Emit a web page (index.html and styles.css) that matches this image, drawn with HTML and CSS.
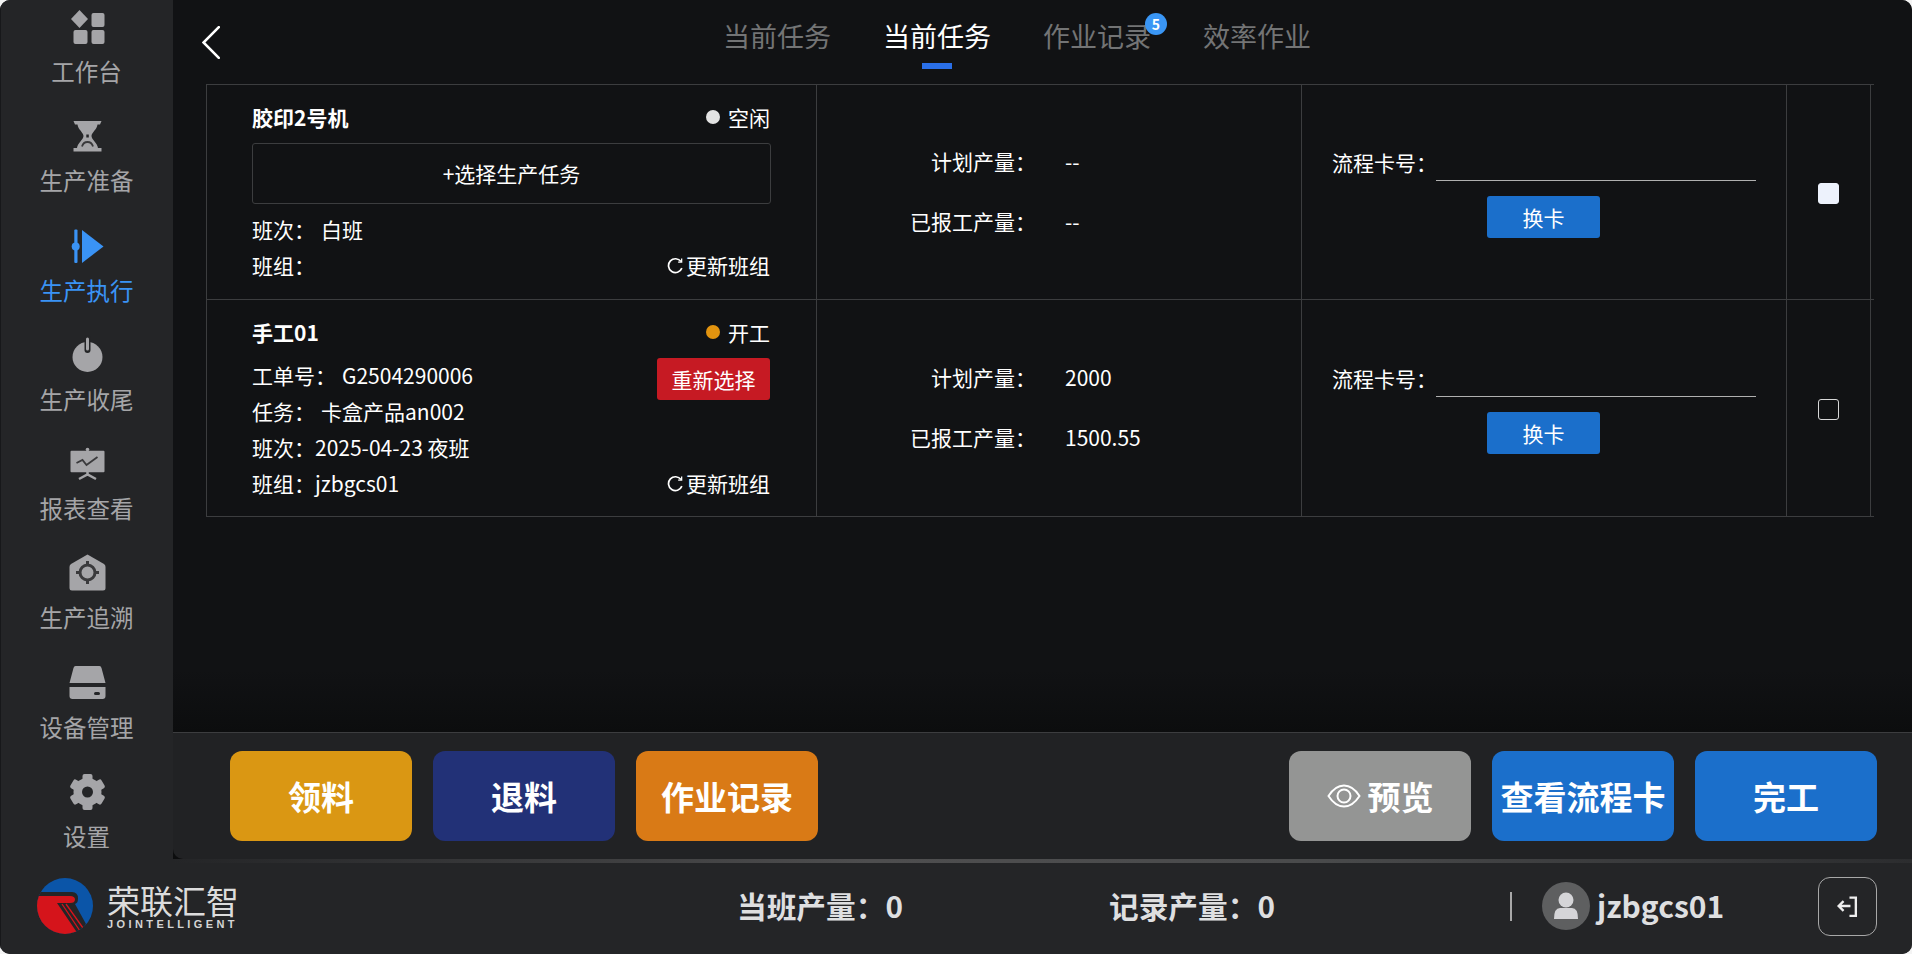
FILE: index.html
```html
<!DOCTYPE html>
<html lang="zh-CN">
<head>
<meta charset="utf-8">
<title>生产执行</title>
<link rel="stylesheet" href="styles.css">
</head>
<body>
<div class="app">
  <nav class="side">
    <a class="nav">
      <svg class="nav-ic" viewBox="0 0 40 34"><path d="M12.5 0l8.5 9-8.5 9L4 9z"/><rect x="24.5" y="3" width="13" height="14" rx="2"/><rect x="6.5" y="20" width="14" height="14" rx="2"/><rect x="24.5" y="20" width="13" height="14" rx="2"/></svg>
      <span>工作台</span>
    </a>
    <a class="nav">
      <svg class="nav-ic" viewBox="0 0 40 34"><path d="M6.5 2h28l-1.5 3.5h-2.5c-.5 5-6 8-6 11.5s6 7 6.5 12h3.500v3.500H6.500V29h3.500c.5-5 6.500-8.500 6.500-12s-5.500-6.500-6-11.500H8z"/><rect class="cut" x="19.300" y="15.500" width="2.500" height="3"/><path class="cut-line" d="M15 27.500c.8-3 3-4.500 5.500-4.500s4.700 1.500 5.500 4.500"/></svg>
      <span>生产准备</span>
    </a>
    <a class="nav active">
      <svg class="nav-ic" viewBox="0 0 40 34"><rect x="7.300" y=".5" width="3.200" height="33.500" rx="1"/><circle cx="8.700" cy="17.400" r="4"/><path d="M15 1l21.500 16.500L15 34z"/></svg>
      <span>生产执行</span>
    </a>
    <a class="nav">
      <svg class="nav-ic" viewBox="0 0 40 34"><circle cx="20.500" cy="19" r="15"/><path class="cut-wide" d="M20.500 0v12"/><path class="up" d="M20.500 1v10"/></svg>
      <span>生产收尾</span>
    </a>
    <a class="nav">
      <svg class="nav-ic" viewBox="0 0 40 34"><rect x="3.500" y="3.800" width="34" height="21.500" rx="1"/><circle cx="20.500" cy="2.500" r="1.800"/><path class="leg" d="M20.500 25v3M12 32l8.500-4.500L29 32"/><path class="cut-line" d="M9.500 16l6-3 4 5 11-8"/></svg>
      <span>报表查看</span>
    </a>
    <a class="nav">
      <svg class="nav-ic" viewBox="0 0 40 34"><path d="M20.500-1.500L37 8q1.500 1 1.500 3v21q0 2.500-2.500 2.500H5q-2.500 0-2.500-2.500V11q0-2 1.500-3z"/><circle class="cut-ring" cx="20.500" cy="16.500" r="7.500"/><path class="cut-ring" d="M20.500 5v4M20.500 24v4M9 16.500h4M28 16.500h4"/></svg>
      <span>生产追溯</span>
    </a>
    <a class="nav">
      <svg class="nav-ic" viewBox="0 0 40 34"><path d="M8.500 0h24q1.500 0 2 2l4 15h-36l4-15q.5-2 2-2z"/><path d="M2.500 21h36v9q0 3-3 3h-30q-3 0-3-3z"/><rect class="cut" x="27" y="26" width="6" height="3" rx="1.500"/></svg>
      <span>设备管理</span>
    </a>
    <a class="nav">
      <svg class="nav-ic" viewBox="0 0 40 34"><circle cx="20.500" cy="17" r="14"/><g class="teeth"><rect x="15.500" y="-1" width="10" height="8" rx="2"/><rect x="15.500" y="-1" width="10" height="8" rx="2" transform="rotate(60 20.500 17)"/><rect x="15.500" y="-1" width="10" height="8" rx="2" transform="rotate(120 20.500 17)"/><rect x="15.500" y="-1" width="10" height="8" rx="2" transform="rotate(180 20.500 17)"/><rect x="15.500" y="-1" width="10" height="8" rx="2" transform="rotate(240 20.500 17)"/><rect x="15.500" y="-1" width="10" height="8" rx="2" transform="rotate(300 20.500 17)"/></g><circle class="cut" cx="20.500" cy="17" r="5.500"/></svg>
      <span>设置</span>
    </a>
  </nav>

  <main class="main">
    <header class="head">
      <svg class="back" viewBox="0 0 18 33"><path d="M16.800 1.200L1.500 16.500l15.300 15.300"/></svg>
      <div class="tabs">
        <a class="tab">当前任务</a>
        <a class="tab on">当前任务</a>
        <a class="tab">作业记录<b class="badge">5</b></a>
        <a class="tab">效率作业</a>
      </div>
    </header>

    <section class="table">
      <div class="row row-a">
        <div class="c-info">
          <div class="top"><strong>胶印2号机</strong><span class="state"><i class="dot idle"></i>空闲</span></div>
          <div class="pick">+选择生产任务</div>
          <div class="line">班次：<span class="gap">白班</span></div>
          <div class="line split"><span>班组：</span><span class="renew"><svg class="re" viewBox="0 0 16 16"><path d="M13.200 4.300A6.500 6.500 0 1 0 14 10.500"/><path class="re-h" d="M13.800 1.500v3.300h-3.300"/></svg>更新班组</span></div>
        </div>
        <div class="c-qty">
          <div class="q"><span class="q-l">计划产量：</span><span>--</span></div>
          <div class="q"><span class="q-l">已报工产量：</span><span>--</span></div>
        </div>
        <div class="c-card">
          <div class="card-line"><span class="card-l">流程卡号：</span><span class="input"></span></div>
          <button class="swap">换卡</button>
        </div>
        <div class="c-check"><span class="box checked"></span></div>
      </div>
      <div class="row row-b">
        <div class="c-info">
          <div class="top"><strong>手工01</strong><span class="state"><i class="dot run"></i>开工</span></div>
          <div class="line split first"><span>工单号：<span class="gap">G2504290006</span></span><button class="redo">重新选择</button></div>
          <div class="line">任务：<span class="gap">卡盒产品an002</span></div>
          <div class="line">班次：2025-04-23 夜班</div>
          <div class="line split"><span>班组：jzbgcs01</span><span class="renew"><svg class="re" viewBox="0 0 16 16"><path d="M13.200 4.300A6.500 6.500 0 1 0 14 10.500"/><path class="re-h" d="M13.800 1.500v3.300h-3.300"/></svg>更新班组</span></div>
        </div>
        <div class="c-qty">
          <div class="q"><span class="q-l">计划产量：</span><span>2000</span></div>
          <div class="q"><span class="q-l">已报工产量：</span><span>1500.55</span></div>
        </div>
        <div class="c-card">
          <div class="card-line"><span class="card-l">流程卡号：</span><span class="input"></span></div>
          <button class="swap">换卡</button>
        </div>
        <div class="c-check"><span class="box"></span></div>
      </div>
    </section>

    <div class="actions">
      <div class="group">
        <button class="act amber">领料</button>
        <button class="act navy">退料</button>
        <button class="act orange">作业记录</button>
      </div>
      <div class="group">
        <button class="act grey"><svg class="eye" viewBox="0 0 34 24"><path d="M1.500 12C6 5 11 1.500 17 1.500S28 5 32.500 12C28 19 23 22.500 17 22.500S6 19 1.500 12z"/><circle cx="17" cy="12" r="6.500"/></svg>预览</button>
        <button class="act blue">查看流程卡</button>
        <button class="act blue">完工</button>
      </div>
    </div>
  </main>

  <footer class="foot">
    <div class="logo">
      <svg class="mark" viewBox="0 0 56 56">
        <defs><clipPath id="disc"><circle cx="28" cy="28" r="28"/></clipPath></defs>
        <g clip-path="url(#disc)">
          <rect width="56" height="56" fill="#0b55a8"/>
          <path fill="#242527" d="M0 14h35q6 0 6 6.500 0 4.500-3 5.500l11 20-7 10H0z"/>
          <path fill="#d5141b" d="M0 18h33q5 0 5 3.500T33 25H20l21 31H0z"/>
          <path class="stripe" d="M25 26l18 27M29 26l17 24"/>
        </g>
      </svg>
      <div class="brand"><div class="brand-cn">荣联汇智</div><div class="brand-en">JOINTELLIGENT</div></div>
    </div>
    <div class="stat s1">当班产量：0</div>
    <div class="stat s2">记录产量：0</div>
    <i class="divider"></i>
    <span class="avatar"><svg viewBox="0 0 48 48"><circle cx="24" cy="18" r="7.500"/><path d="M12 37q0-11 6-11h12q6 0 6 11z"/></svg></span>
    <span class="user">jzbgcs01</span>
    <button class="exit"><svg viewBox="0 0 58 58"><path d="M31 20h6.500v18.500H31M20 28.500h12M25 23.500l-5 5 5 5"/></svg></button>
  </footer>
</div>
</body>
</html>
```
FILE: styles.css
```css
* { box-sizing: border-box; }
html, body { margin: 0; padding: 0; background: #f4f4f4; }
body { font-family: "Noto Sans CJK SC", "Noto Sans", sans-serif; color: #fff; overflow: hidden; }
button { font-family: inherit; border: 0; color: #fff; padding: 0; }

.app {
  width: 1912px; height: 954px;
  display: grid;
  grid-template-columns: 173px 1fr;
  grid-template-rows: 859px 95px;
  border-radius: 10px;
  overflow: hidden;
  background: #242527;
}

/* sidebar */
.side {
  background: #242527;
  box-shadow: inset 1px 0 #17181a;
  display: flex; flex-direction: column; align-items: center;
  gap: 31.3px;
  padding-top: 10px;
  overflow: hidden;
}
.nav { display: flex; flex-direction: column; align-items: center; color: #a5a5a8; font-size: 23.500px; line-height: 34px; gap: 10px; }
.nav-ic { width: 40px; height: 34px; fill: #a5a5a8; overflow: visible; display: block; }
.nav.active { color: #3a93f5; }
.nav.active .nav-ic { fill: #3a93f5; }
.cut { fill: #242527; }
.cut-line { fill: none; stroke: #3a3a3c; stroke-width: 1.800; }
.cut-wide { fill: none; stroke: #242527; stroke-width: 6; stroke-linecap: round; }
.up { fill: none; stroke: #a5a5a8; stroke-width: 3; stroke-linecap: round; }
.leg { fill: none; stroke: #a5a5a8; stroke-width: 2.500; }
.cut-ring { fill: none; stroke: #3a3a3c; stroke-width: 3; }

/* main */
.main {
  display: flex; flex-direction: column;
  background: linear-gradient(to bottom, #111214 0, #111214 670px, #0c0d0e 732px);
  min-width: 0;
}
.head { height: 84px; display: flex; align-items: flex-start; padding-left: 29px; flex: none; }
.back { width: 18px; height: 33px; margin-top: 26px; fill: none; stroke: #fff; stroke-width: 2.600; stroke-linecap: round; flex: none; }
.tabs { display: flex; gap: 54px; margin-left: 503px; padding-top: 18px; }
.tab { position: relative; width: 106px; text-align: center; font-size: 27px; line-height: 36px; color: #737475; white-space: nowrap; }
.tab.on { color: #fff; }
.tab.on::after { content: ""; position: absolute; left: 39px; top: 45px; width: 30px; height: 6px; background: #2a6fe8; }
.badge { position: absolute; left: 102px; top: -5px; width: 22px; height: 22px; border-radius: 50%; background: #3a96f5; color: #fff; font-size: 14px; line-height: 22px; text-align: center; font-weight: 700; }

/* table */
.table { margin-left: 33px; width: 1668px; border-top: 1px solid #3c3d3f; border-left: 1px solid #3c3d3f; flex: none; }
.row { display: grid; grid-template-columns: 610px 485px 485px 84px; border-bottom: 1px solid #3c3d3f; font-size: 21px; line-height: 36px; }
.row-a { height: 215px; }
.row-b { height: 217px; }
.row > div { border-right: 1px solid #3c3d3f; }
.c-info { padding: 14px 46px 0 45px; min-width: 0; }
.top { display: flex; justify-content: space-between; font-weight: 400; }
.top strong { font-weight: 700; }
.state { display: flex; align-items: center; }
.dot { width: 14px; height: 14px; border-radius: 50%; margin-right: 8px; display: block; }
.idle { background: #e3e3e3; }
.run { background: #e3940f; }
.pick { height: 61px; margin: 8px -1px 7px 0; padding-bottom: 2px; border: 1px solid #3c3d3f; border-radius: 3px; display: flex; align-items: center; justify-content: center; }
.line { height: 36px; }
.split { display: flex; justify-content: space-between; }
.first { margin-top: 7px; }
.gap { margin-left: 6px; }
.renew { display: flex; align-items: center; }
.re { width: 17px; height: 17px; margin-right: 2px; fill: none; stroke: #fff; stroke-width: 1.600; }
.re-h { stroke-width: 1.200; }
.redo { width: 113px; height: 42px; margin: 1px 0 -7px; background: #c61a23; border-radius: 3px; font-size: 21px; }

.c-qty { display: flex; flex-direction: column; justify-content: center; gap: 24px; padding-bottom: 2px; }
.q { display: grid; grid-template-columns: 219px 1fr; column-gap: 29px; }
.q-l { text-align: right; }
.c-card { display: flex; flex-direction: column; justify-content: center; padding: 0 0 2px 30px; }
.card-line { display: flex; height: 36px; }
.card-l { line-height: 34px; }
.input { width: 320px; margin-left: -1px; border-bottom: 1.500px solid #b0b0b0; height: 36px; }
.swap { width: 113px; height: 42px; margin: 15px 0 0 155px; background: #1b6fcb; border-radius: 3px; font-size: 21px; }
.c-check { display: flex; align-items: center; justify-content: center; padding-top: 3px; }
.box { width: 21px; height: 21px; border-radius: 3px; border: 1.500px solid #d8d8d8; display: block; }
.box.checked { background: #edf2fc; border-color: #edf2fc; }

/* actions */
.actions {
  margin-top: auto; height: 127px; flex: none;
  display: flex; justify-content: space-between;
  padding: 18px 35px 0 57px;
  border-top: 1px solid #3c3d3f;
  background: #212224;
  border-bottom-left-radius: 10px;
}
.group { display: flex; gap: 21px; }
.act { width: 182px; height: 90px; border-radius: 12px; font-size: 33px; font-weight: 700; display: flex; align-items: center; justify-content: center; }
.amber { background: #da9713; }
.navy { background: #223177; }
.orange { background: #d97a16; }
.grey { background: #949594; }
.blue { background: #1b6fcb; }
.eye { width: 34px; height: 24px; margin-right: 7px; fill: none; stroke: #fff; stroke-width: 2; }

/* footer */
.foot {
  grid-column: 1 / 3;
  background: #242527;
  box-shadow: inset 1px 0 #17181a;
  display: flex; align-items: center;
  position: relative;
  padding: 4px 0 5px;
  color: #dedfe0;
}
.foot::before { content: ""; position: absolute; left: 173px; right: 0; top: 0; height: 4px; background: linear-gradient(to right, #242527 0, #4e4e4f 40%, #4a4b4c 65%, #2c2d2f 100%); }
.logo { display: flex; align-items: center; margin-left: 37px; width: 199px; flex: none; }
.mark { width: 56px; height: 56px; flex: none; }
.stripe { fill: none; stroke: #d5141b; stroke-width: 1.300; }
.brand { margin-left: 14px; }
.brand-cn { font-size: 33px; line-height: 35px; font-weight: 400; color: #dcdcdc; white-space: nowrap; }
.brand-en { font-size: 11px; line-height: 12px; font-weight: 700; letter-spacing: 3.400px; color: #d5d5d5; font-family: "Liberation Sans", sans-serif; white-space: nowrap; }
.stat { font-size: 29.700px; font-weight: 700; white-space: nowrap; flex: none; margin-bottom: 2px; }
.s1 { margin-left: 501px; width: 372px; }
.s2 { width: 401px; }
.divider { width: 2px; height: 29px; background: #a8a8a8; flex: none; }
.avatar { width: 48px; height: 48px; border-radius: 50%; background: #5e5f60; margin-left: 30px; flex: none; }
.avatar svg { display: block; width: 48px; height: 48px; fill: #d5d5d8; }
.user { font-size: 30px; font-weight: 700; margin: 0 0 2px 7px; width: 221px; white-space: nowrap; flex: none; }
.exit { width: 59px; height: 59px; border-radius: 12px; border: 1px solid #a8a8a8; background: transparent; flex: none; }
.exit svg { display: block; width: 57px; height: 57px; fill: none; stroke: #eee; stroke-width: 2.400; }
```
